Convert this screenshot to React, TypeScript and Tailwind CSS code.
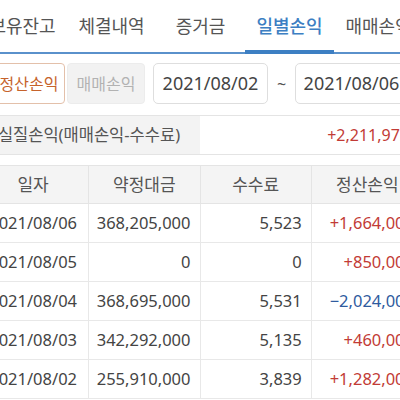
const rows = [
  { date: "2021/08/06", amount: "368,205,000", fee: "5,523", pnl: "+1,664,000" },
  { date: "2021/08/05", amount: "0", fee: "0", pnl: "+850,000" },
  { date: "2021/08/04", amount: "368,695,000", fee: "5,531", pnl: "−2,024,000" },
  { date: "2021/08/03", amount: "342,292,000", fee: "5,135", pnl: "+460,000" },
  { date: "2021/08/02", amount: "255,910,000", fee: "3,839", pnl: "+1,282,000" },
];

const tabs = ["보유잔고", "체결내역", "증거금", "일별손익", "매매손익"];

export default function App() {
  return (
    <div className="w-[400px] h-[400px] overflow-hidden bg-white">
      <div className="w-[445px] -ml-[22px] font-['Noto_Sans','Noto_Sans_CJK_KR',sans-serif] text-[#444]">
        {/* tabs */}
        <div className="flex h-[54px] border-b-2 border-[#5a91cb]">
          {tabs.map((t) =>
            t === "일별손익" ? (
              <div
                key={t}
                className="w-[89px] h-[54px] self-start border-b-4 border-[#3d7fc3] flex items-center justify-center text-[18px] font-medium text-[#3d7fc3]"
              >
                <span className="mt-[2px]">{t}</span>
              </div>
            ) : (
              <div key={t} className="w-[89px] flex items-center justify-center text-[18px] text-[#555]">
                {t}
              </div>
            )
          )}
        </div>

        {/* filters */}
        <div className="flex items-center px-[15px] pt-[9px] h-[50px]">
          <div className="w-[72px] h-[41px] flex items-center justify-center border border-[#e3c0aa] rounded-[4px] text-[16px] text-[#c6632c]">
            정산손익
          </div>
          <div className="ml-[2px] w-[78px] h-[41px] flex items-center justify-center bg-[#f2f2f2] border border-[#ececec] rounded-[4px] text-[16px] text-[#b2b2b2]">
            매매손익
          </div>
          <div className="ml-[8px] w-[115px] h-[41px] flex items-center justify-center border border-[#dedede] rounded-[5px] text-[18px]">
            2021/08/02
          </div>
          <div className="w-[27px] text-center text-[16px] text-[#555]">~</div>
          <div className="w-[113px] h-[41px] flex items-center justify-center border border-[#dedede] rounded-[5px] text-[18px]">
            2021/08/06
          </div>
        </div>

        {/* summary */}
        <div className="mt-[11px] flex h-[40px] border-y border-[#e4e4e4]">
          <div className="w-[222px] bg-[#f3f3f3] flex items-center justify-center text-[16.5px] text-[#555]">
            실질손익(매매손익-수수료)
          </div>
          <div className="flex-1 flex items-center justify-end pr-[14px] text-[16px] text-[#c23b36]">
            +2,211,972
          </div>
        </div>

        {/* table */}
        <div className="mt-[10px] border-t border-[#e4e4e4]">
          <div className="grid grid-cols-4 h-[38px] bg-[#f4f4f4] border-b border-[#e4e4e4] text-[17px] text-[#555]">
            <div className="flex items-center justify-center border-r border-[#e4e4e4]">일자</div>
            <div className="flex items-center justify-center border-r border-[#e4e4e4]">약정대금</div>
            <div className="flex items-center justify-center border-r border-[#e4e4e4]">수수료</div>
            <div className="flex items-center justify-center">정산손익</div>
          </div>
          {rows.map((r) => (
            <div key={r.date} className="grid grid-cols-4 h-[39px] border-b border-[#e8e8e8] text-[16.5px]">
              <div className="flex items-center justify-center border-r border-[#e8e8e8]">{r.date}</div>
              <div className="flex items-center justify-end pr-[9px] border-r border-[#e8e8e8]">{r.amount}</div>
              <div className="flex items-center justify-end pr-[9px] border-r border-[#e8e8e8]">{r.fee}</div>
              <div
                className={
                  "flex items-center justify-end pr-[9px] " +
                  (r.pnl.startsWith("+") ? "text-[#c23b36]" : "text-[#2f5b9e]")
                }
              >
                {r.pnl}
              </div>
            </div>
          ))}
        </div>
      </div>
    </div>
  );
}
